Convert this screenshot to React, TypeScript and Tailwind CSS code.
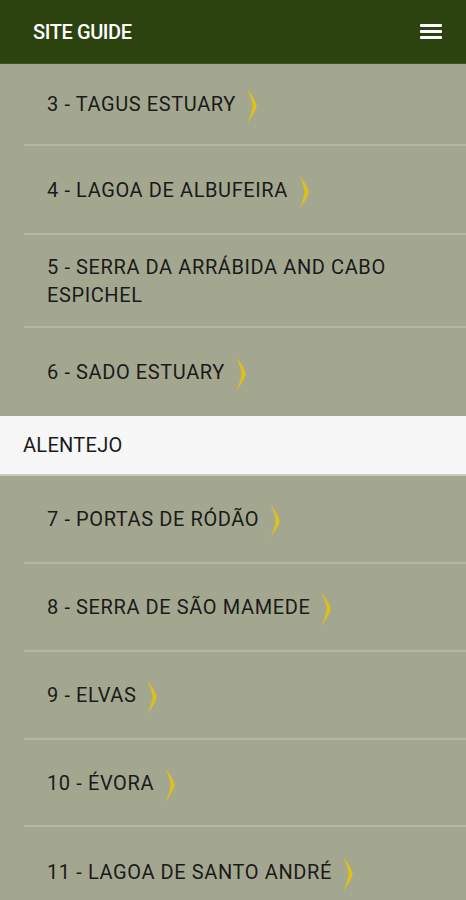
import React from "react";

const Chevron = () => (
  <svg width="12" height="36" viewBox="0 0 12 36" className="shrink-0 ml-[10px] mt-[4px]">
    <path
      d="M1.5 1 C6 8 10.5 13.5 10.5 18 C10.5 22.5 6 28 1.5 35 C4 28 6.5 22.5 6.5 18 C6.5 13.5 4 8 1.5 1 Z"
      fill="#e0be1c"
    />
  </svg>
);

type Item = { label: string; chevron: boolean; h: number; sep: boolean };

const Row = ({ item }: { item: Item }) => (
  <div className="flex flex-col">
    <div className="flex items-center pl-[47px] pr-4" style={{ height: item.h }}>
      <span className="text-[20px] leading-[28px] tracking-[0.6px] text-[#1a1a1a]">{item.label}</span>
      {item.chevron && <Chevron />}
    </div>
    {item.sep && <div className="ml-[24px] h-[2px] bg-[#b4b7a2]" />}
  </div>
);

export default function App() {
  const top: Item[] = [
    { label: "3 - TAGUS ESTUARY", chevron: true, h: 80, sep: true },
    { label: "4 - LAGOA DE ALBUFEIRA", chevron: true, h: 87, sep: true },
    { label: "5 - SERRA DA ARRÁBIDA AND CABO ESPICHEL", chevron: false, h: 91, sep: true },
    { label: "6 - SADO ESTUARY", chevron: true, h: 88, sep: false },
  ];
  const bottom: Item[] = [
    { label: "7 - PORTAS DE RÓDÃO", chevron: true, h: 86, sep: true },
    { label: "8 - SERRA DE SÃO MAMEDE", chevron: true, h: 86, sep: true },
    { label: "9 - ELVAS", chevron: true, h: 86, sep: true },
    { label: "10 - ÉVORA", chevron: true, h: 85, sep: true },
    { label: "11 - LAGOA DE SANTO ANDRÉ", chevron: true, h: 90, sep: false },
  ];
  return (
    <div
      className="w-[466px] h-[900px] overflow-hidden bg-[#a4a790] flex flex-col"
      style={{ fontFamily: "Roboto, 'Liberation Sans', sans-serif" }}
    >
      <div className="h-[64px] bg-[#2c420f] flex items-center justify-between pl-[33px] pr-[24px] shrink-0 border-b border-[#3d5418]">
        <span className="text-white text-[20px] font-medium tracking-[-0.4px]">SITE GUIDE</span>
        <div className="flex flex-col gap-[3px]">
          <div className="w-[22px] h-[3px] bg-white rounded-[1px]" />
          <div className="w-[22px] h-[3px] bg-white rounded-[1px]" />
          <div className="w-[22px] h-[3px] bg-white rounded-[1px]" />
        </div>
      </div>
      {top.map((it) => (
        <Row key={it.label} item={it} />
      ))}
      <div className="h-[60px] bg-[#f7f7f7] flex items-center pl-[23px] border-b-2 border-[#c9cbbd] shrink-0">
        <span className="text-[20px] tracking-[0.3px] text-[#1a1a1a]">ALENTEJO</span>
      </div>
      {bottom.map((it) => (
        <Row key={it.label} item={it} />
      ))}
    </div>
  );
}
